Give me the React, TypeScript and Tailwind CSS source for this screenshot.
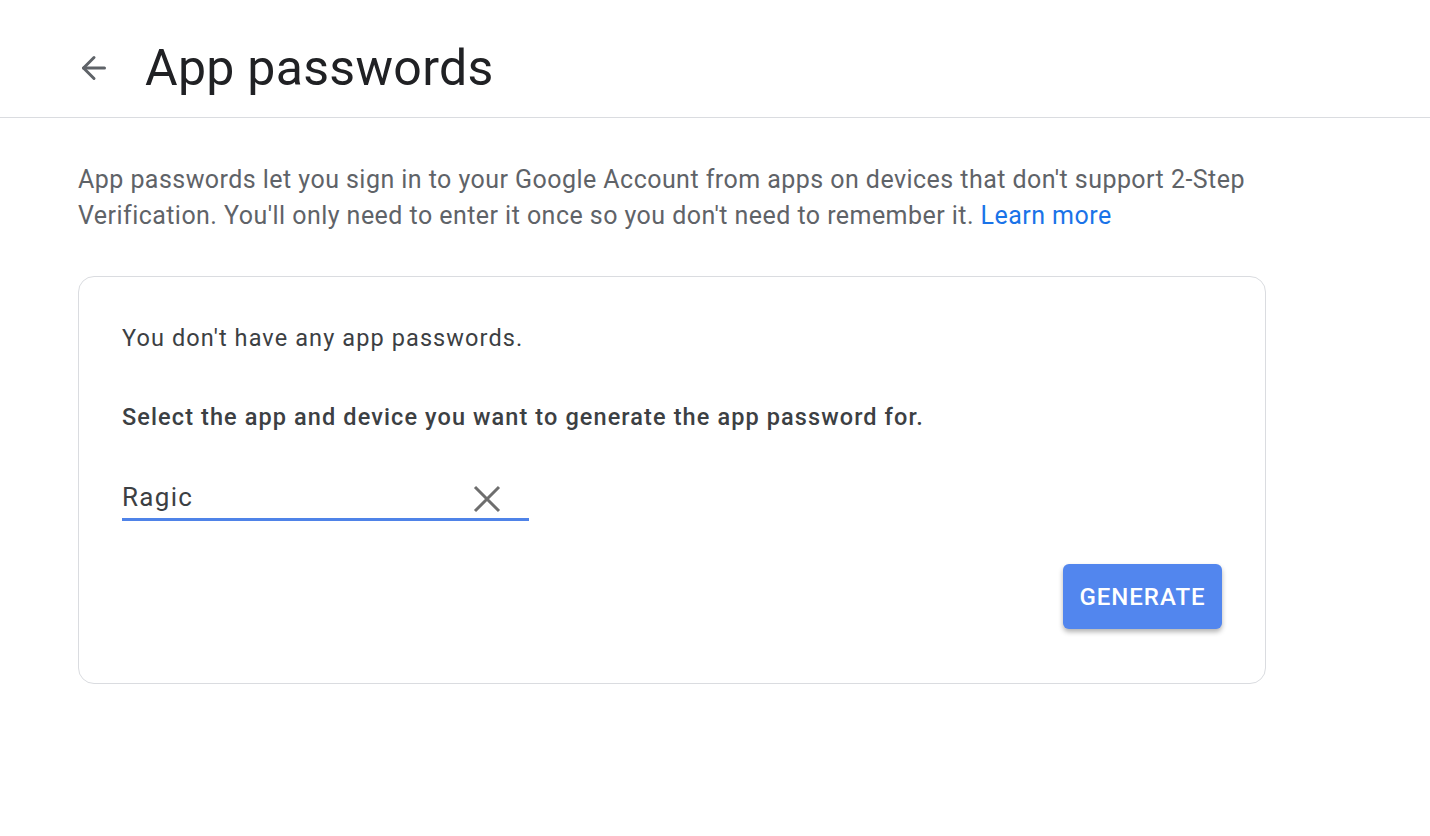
import { ArrowLeft } from 'lucide-react';

const App = () => {
  return (
    <div className="min-h-screen bg-white font-['Roboto',_'Liberation_Sans',_sans-serif]">
      {/* header */}
      <div className="h-[118px] border-b border-[#dadce0] flex items-center pl-[76px] pt-[18px]">
        <ArrowLeft className="w-[36px] h-[36px] text-[#5f6368] mr-[33px]" strokeWidth={2} />
        <h1 className="text-[50px] leading-none text-[#202124] tracking-[0.3px]">App passwords</h1>
      </div>

      <div className="pl-[78px] pt-[44px]">
        <p className="text-[25px] leading-[36px] text-[#5f6368] tracking-[0.45px] w-[1200px]">
          App passwords let you sign in to your Google Account from apps on devices that don't support 2-Step
          Verification. You'll only need to enter it once so you don't need to remember it.{' '}
          <span className="text-[#1a73e8]">Learn more</span>
        </p>

        <div className="mt-[42px] w-[1188px] h-[408px] border border-[#dadce0] rounded-[16px] px-[43px] pt-[44px] flex flex-col">
          <p className="text-[23.5px] leading-[34px] tracking-[1.1px] text-[#3c4043]">You don't have any app passwords.</p>
          <p className="mt-[45px] text-[23.5px] leading-[34px] tracking-[1.1px] font-medium text-[#3c4043]">
            Select the app and device you want to generate the app password for.
          </p>
          <div className="mt-[43px] w-[407px] h-[44px] border-b-[3px] border-[#4f83e8] flex items-center justify-between">
            <span className="text-[26px] text-[#3c4043] tracking-[1.3px]">Ragic</span>
            <svg width="28" height="28" viewBox="0 0 28 28" className="mr-[28px] mt-[2px]">
              <path d="M2 2 L26 26 M26 2 L2 26" stroke="#6e6e6e" strokeWidth="3" fill="none" />
            </svg>
          </div>
          <div className="flex justify-end mt-[43px]">
            <button className="w-[159px] h-[65px] rounded-[6px] bg-[#5286ee] text-white text-[24px] font-medium tracking-[1px] shadow-[0_3px_5px_rgba(0,0,0,0.3)]">
              GENERATE
            </button>
          </div>
        </div>
      </div>
    </div>
  );
};

export default App;
